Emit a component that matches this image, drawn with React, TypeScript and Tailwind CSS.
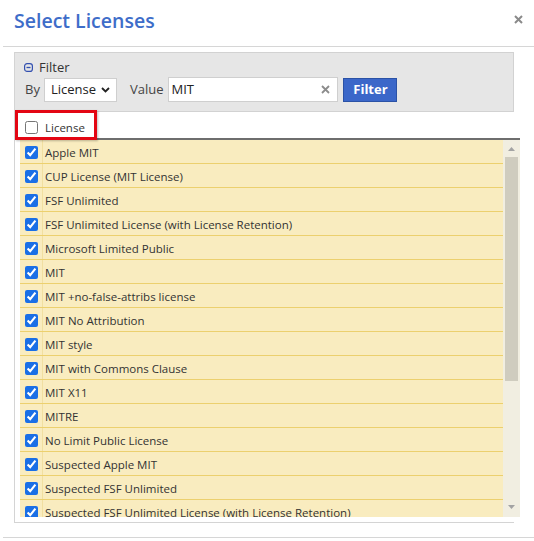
import React from "react";

const rows = [
  "Apple MIT",
  "CUP License (MIT License)",
  "FSF Unlimited",
  "FSF Unlimited License (with License Retention)",
  "Microsoft Limited Public",
  "MIT",
  "MIT +no-false-attribs license",
  "MIT No Attribution",
  "MIT style",
  "MIT with Commons Clause",
  "MIT X11",
  "MITRE",
  "No Limit Public License",
  "Suspected Apple MIT",
  "Suspected FSF Unlimited",
  "Suspected FSF Unlimited License (with License Retention)",
];

export default function App() {
  return (
    <div className="w-[534px] h-[541px] bg-white overflow-hidden font-['Open_Sans',sans-serif] text-[#333]">
      {/* Header */}
      <div className="ml-[3px] h-[47px] border-b border-[#d6d6d6] flex items-center justify-between pl-[11px] pr-[11px]">
        <h1 className="text-[19.5px] font-semibold text-[#3e6dc9] leading-none -mt-[5px]">Select Licenses</h1>
        <svg width="9" height="9" viewBox="0 0 9 9" className="-mt-[8px]">
          <path d="M1 1 L8 8 M8 1 L1 8" stroke="#8a8a8a" strokeWidth="2" />
        </svg>
      </div>

      {/* Body */}
      <div className="pt-[5px]">
        <div className="ml-[14px] w-[500px] h-[471px] border-l border-b border-[#d4d4d4]">
          {/* Filter panel */}
          <div className="h-[60px] bg-[#e6e6e6] border-t border-r border-b border-[#d2d2d2] pl-[8px] pt-[5px]">
            <div className="flex items-center gap-[6px] h-[18px]">
              <svg width="9" height="9" viewBox="0 0 9 9" className="ml-[1px]">
                <rect x="0.6" y="0.6" width="7.8" height="7.8" rx="2.5" fill="none" stroke="#3350b0" strokeWidth="1.2" />
                <path d="M2.5 4.5 H6.5" stroke="#3350b0" strokeWidth="1.3" />
              </svg>
              <span className="text-[13px] leading-none">Filter</span>
            </div>
            <div className="flex items-center mt-[1px] h-[25px]">
              <span className="text-[13px] text-[#444] ml-[2px]">By</span>
              <div className="ml-[4px] w-[73px] h-[24px] bg-white border border-[#cfcfcf] flex items-center pl-[6px] gap-[5px]">
                <span className="text-[13px] text-[#222]">License</span>
                <svg width="9" height="6" viewBox="0 0 9 6">
                  <path d="M1 1 L4.5 4.5 L8 1" stroke="#222" strokeWidth="1.8" fill="none" />
                </svg>
              </div>
              <span className="text-[13px] text-[#444] ml-[13px]">Value</span>
              <div className="ml-[5px] w-[170px] h-[25px] bg-white border border-[#cfcfcf] flex items-center justify-between pl-[2px] pr-[7px]">
                <span className="text-[13px] text-[#222]">MIT</span>
                <svg width="9" height="9" viewBox="0 0 9 9">
                  <path d="M1 1 L8 8 M8 1 L1 8" stroke="#8c8c8c" strokeWidth="1.8" />
                </svg>
              </div>
              <button className="ml-[5px] w-[54px] h-[24px] bg-[#3b67c9] border border-[#2b52a6] text-white text-[13px] font-bold flex items-center justify-center">
                Filter
              </button>
            </div>
          </div>

          {/* Table */}
          <div className="ml-[5px] w-[500px] relative">
            <div className="h-[28px] border-b-2 border-[#6e6e6e] flex items-center pl-[5px] pt-[5px] bg-white">
              <input type="checkbox" className="w-[13px] h-[13px] m-0" readOnly />
              <span className="ml-[7px] text-[11.5px] text-[#333]">License</span>
            </div>
            <div className="absolute left-[-5px] top-[-2px] w-[82px] h-[30px] border-[3px] border-[#e30613] shadow-[1px_1px_2px_rgba(0,0,0,0.25)] pointer-events-none" />
            <div className="h-[377px] flex overflow-hidden">
              <div className="w-[483px] overflow-hidden">
                {rows.map((r) => (
                  <div key={r} className="h-[24px] flex bg-[#f9ecbf] border-b border-[#ecd06e]">
                    <div className="w-[23px] border-r border-[#f1dfa0] flex items-center pl-[5px] pt-[1px]">
                      <input type="checkbox" checked readOnly className="w-[13px] h-[13px] m-0 accent-[#1a6fe6]" />
                    </div>
                    <div className="flex items-center pl-[2px] pt-[2px] text-[11.5px] text-[#333] whitespace-nowrap">{r}</div>
                  </div>
                ))}
              </div>
              <div className="w-[17px] bg-[#f1eee1] flex flex-col items-center">
                <div className="h-[17px] flex items-center justify-center pt-[1px]">
                  <svg width="7" height="4" viewBox="0 0 7 4">
                    <path d="M0 4 L3.5 0 L7 4 Z" fill="#a3a3a3" />
                  </svg>
                </div>
                <div className="w-[13px] h-[224px] bg-[#cfccbf]" />
                <div className="flex-1" />
                <div className="h-[17px] flex items-center justify-center pb-[3px]">
                  <svg width="7" height="4" viewBox="0 0 7 4">
                    <path d="M0 0 L7 0 L3.5 4 Z" fill="#a3a3a3" />
                  </svg>
                </div>
              </div>
            </div>
          </div>
        </div>
        <div className="ml-[3px] mt-[14px] border-t border-[#d6d6d6]" />
      </div>
    </div>
  );
}
